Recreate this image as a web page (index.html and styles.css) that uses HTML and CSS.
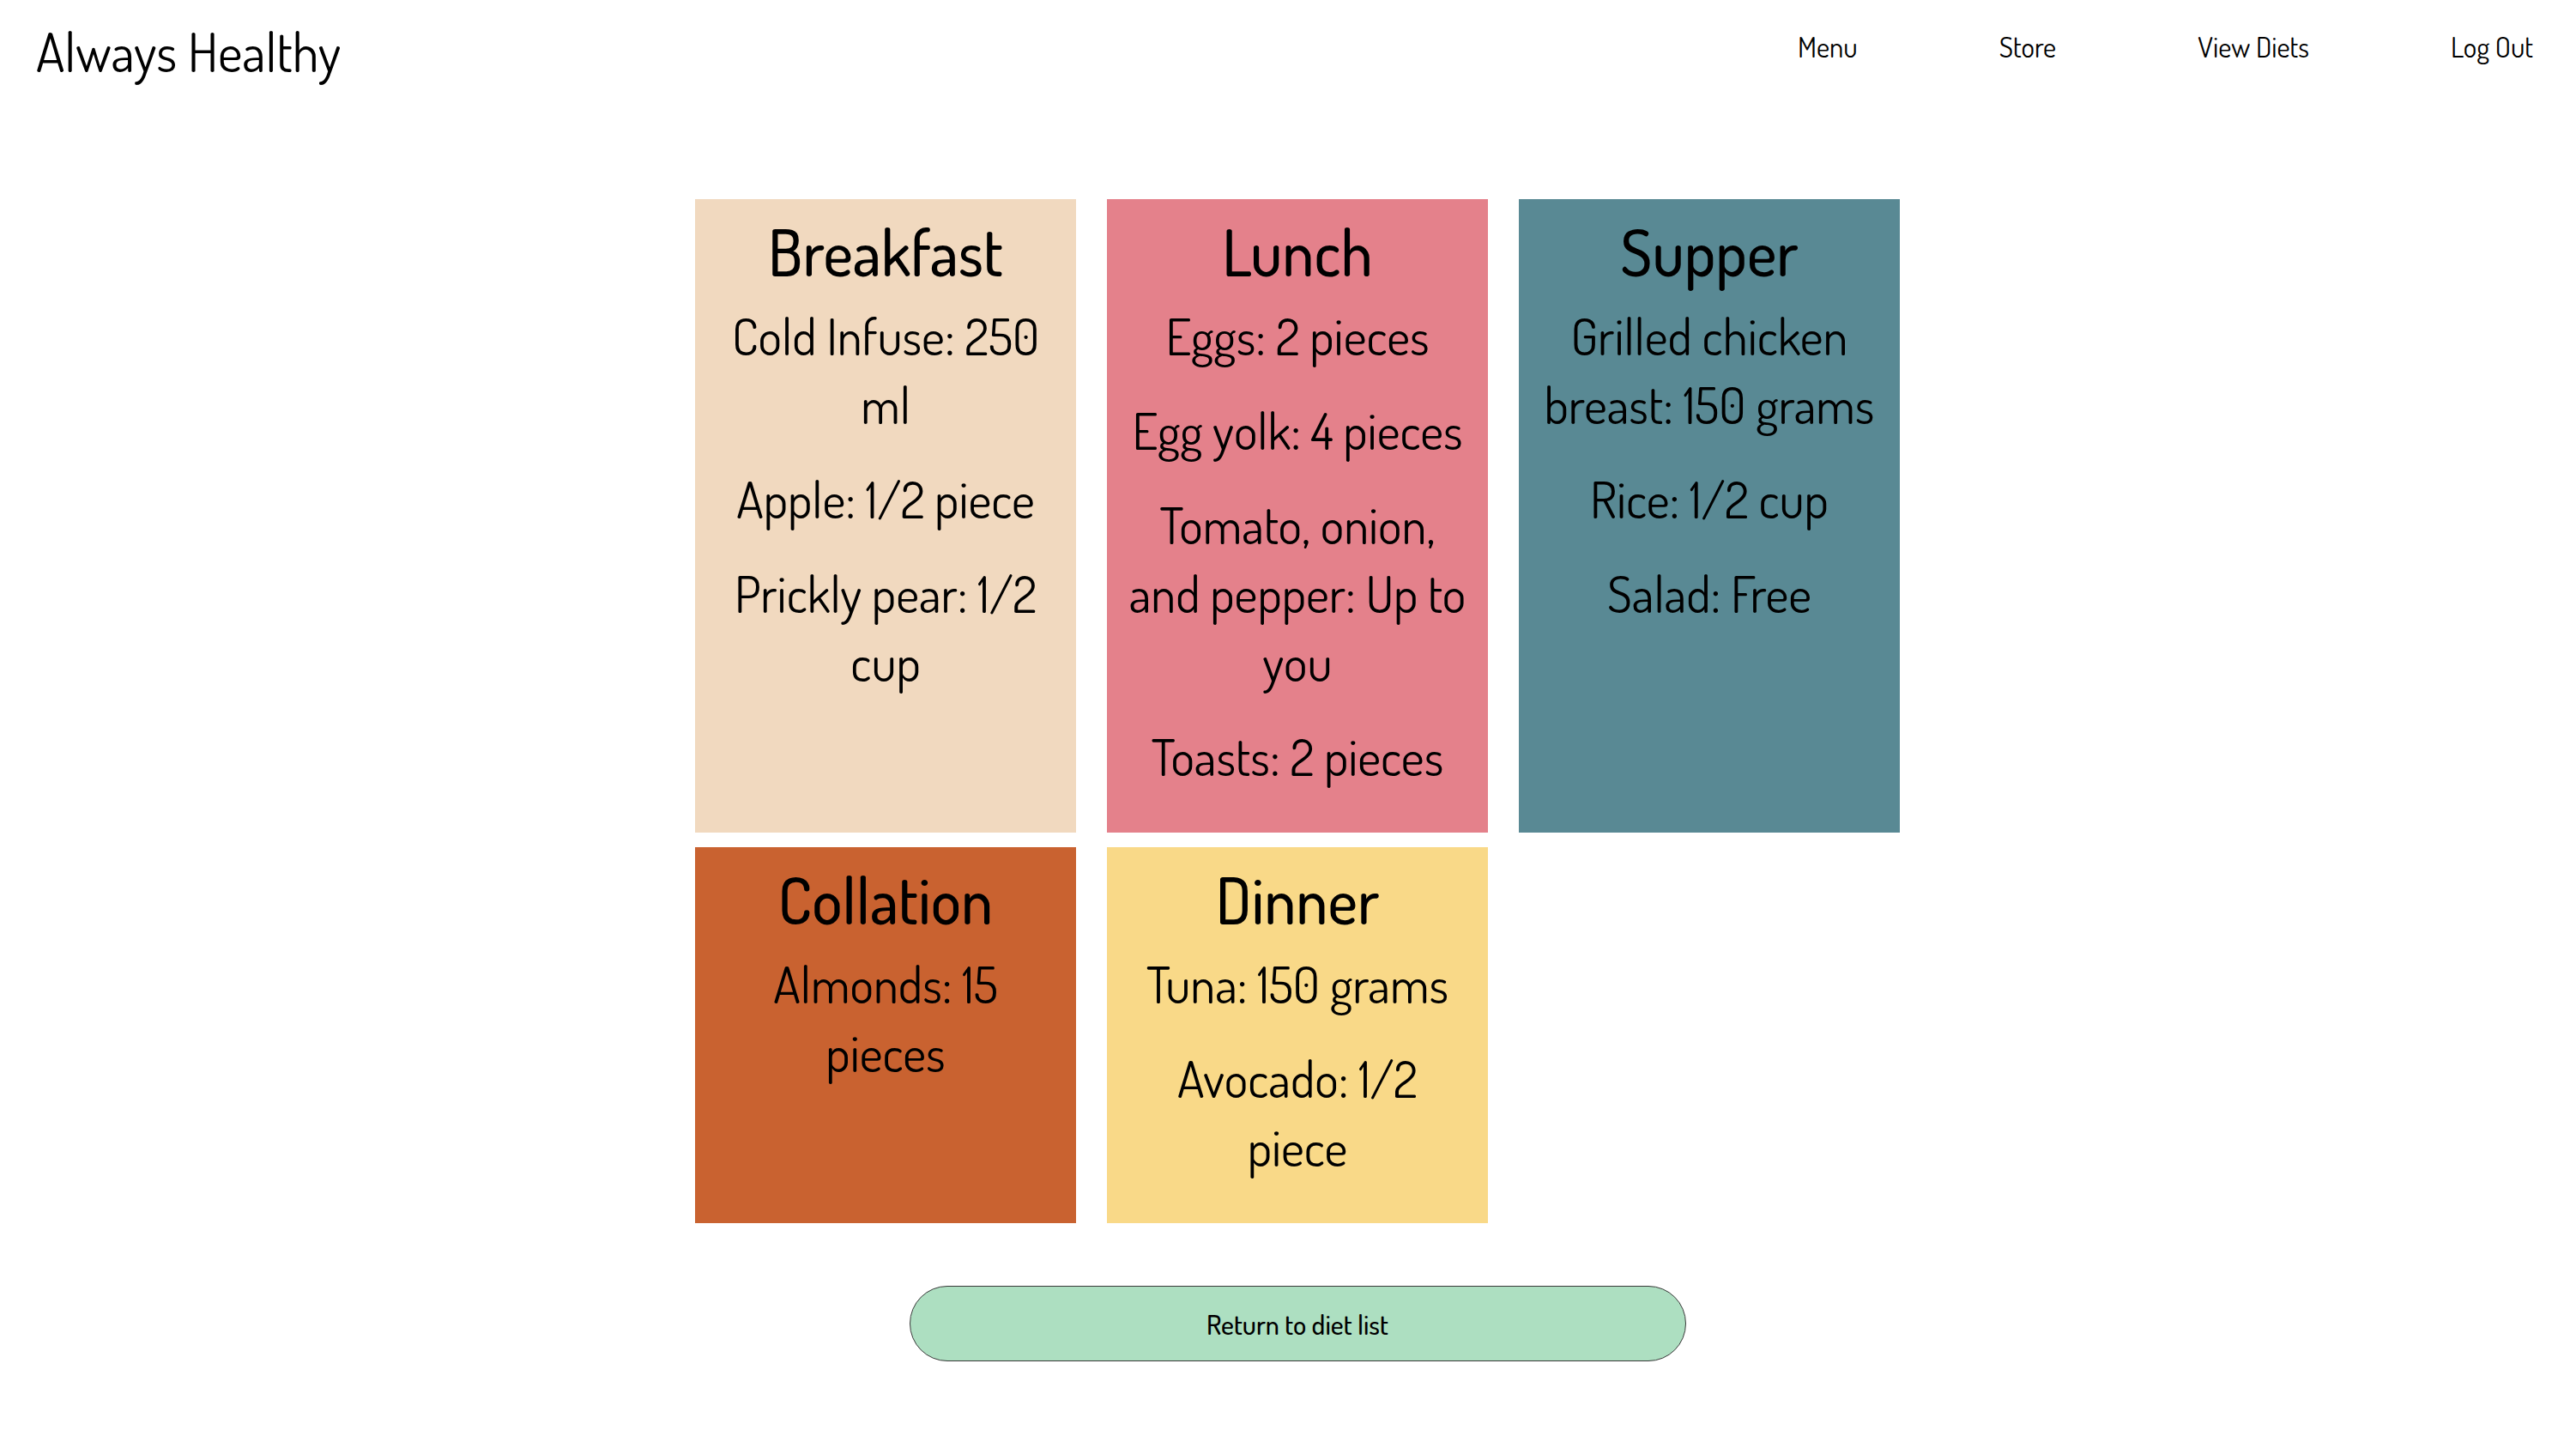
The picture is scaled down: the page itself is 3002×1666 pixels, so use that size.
FILE: index.html
```
<!DOCTYPE html>
<html lang="en">
<head>
<meta charset="utf-8">
<title>Always Healthy</title>
<link rel="stylesheet" href="styles.css">
</head>
<body>
<header class="topbar">
  <h1 class="brand">Always Healthy</h1>
  <nav class="nav">
    <a class="nav-link" href="#">Menu</a>
    <a class="nav-link" href="#">Store</a>
    <a class="nav-link" href="#">View Diets</a>
    <a class="nav-link" href="#">Log Out</a>
  </nav>
</header>
<main class="content">
  <section class="meals">
    <article class="meal meal-breakfast">
      <h2 class="meal-title">Breakfast</h2>
      <p class="meal-item">Cold Infuse: 250 ml</p>
      <p class="meal-item">Apple: 1/2 piece</p>
      <p class="meal-item">Prickly pear: 1/2 cup</p>
    </article>
    <article class="meal meal-lunch">
      <h2 class="meal-title">Lunch</h2>
      <p class="meal-item">Eggs: 2 pieces</p>
      <p class="meal-item">Egg yolk: 4 pieces</p>
      <p class="meal-item">Tomato, onion, and pepper: Up to you</p>
      <p class="meal-item">Toasts: 2 pieces</p>
    </article>
    <article class="meal meal-supper">
      <h2 class="meal-title">Supper</h2>
      <p class="meal-item">Grilled chicken breast: 150 grams</p>
      <p class="meal-item">Rice: 1/2 cup</p>
      <p class="meal-item">Salad: Free</p>
    </article>
    <article class="meal meal-collation">
      <h2 class="meal-title">Collation</h2>
      <p class="meal-item">Almonds: 15 pieces</p>
    </article>
    <article class="meal meal-dinner">
      <h2 class="meal-title">Dinner</h2>
      <p class="meal-item">Tuna: 150 grams</p>
      <p class="meal-item">Avocado: 1/2 piece</p>
    </article>
  </section>
  <button class="return-btn" type="button">Return to diet list</button>
</main>
</body>
</html>
```
FILE: styles.css
```
* { box-sizing: border-box; }
html, body { margin: 0; padding: 0; background: #ffffff; }
body {
  font-family: "Dosis", "Liberation Sans Narrow", "DejaVu Sans Condensed", sans-serif;
  color: #000000;
}
.topbar {
  display: flex;
  justify-content: space-between;
  align-items: flex-start;
  padding: 20px 50px 0 42px;
  height: 105px;
}
.brand {
  margin: 0;
  font-size: 62px;
  font-weight: 400;
  line-height: 80px;
}
.nav {
  display: flex;
  gap: 165px;
  padding-top: 14px;
}
.nav-link {
  font-size: 33px;
  line-height: 40px;
  color: #000000;
  text-decoration: none;
}
.content {
  display: flex;
  flex-direction: column;
  align-items: center;
  padding: 127px 0 0 22px;
}
.meals {
  display: grid;
  grid-template-columns: repeat(3, 444px);
  column-gap: 36px;
  row-gap: 17px;
}
.meal {
  padding: 16px 20px 19px;
  text-align: center;
}
.meal-title {
  margin: 0 0 13px;
  font-size: 74px;
  font-weight: 500;
  line-height: 90px;
}
.meal-item {
  margin: 0 0 30px;
  font-size: 58.5px;
  line-height: 80px;
}
.meal-breakfast { background: #f1d9bf; }
.meal-lunch { background: #e4818b; }
.meal-supper { background: #598994; }
.meal-collation { background: #c96230; }
.meal-dinner { background: #f9d988; }
.return-btn {
  margin-top: 73px;
  width: 905px;
  height: 88px;
  border: 1px solid #3a3a3a;
  border-radius: 44px;
  background: #addfc1;
  font-family: "Dosis", sans-serif;
  font-size: 32px;
  font-weight: 500;
  color: #000000;
  cursor: pointer;
}
```
